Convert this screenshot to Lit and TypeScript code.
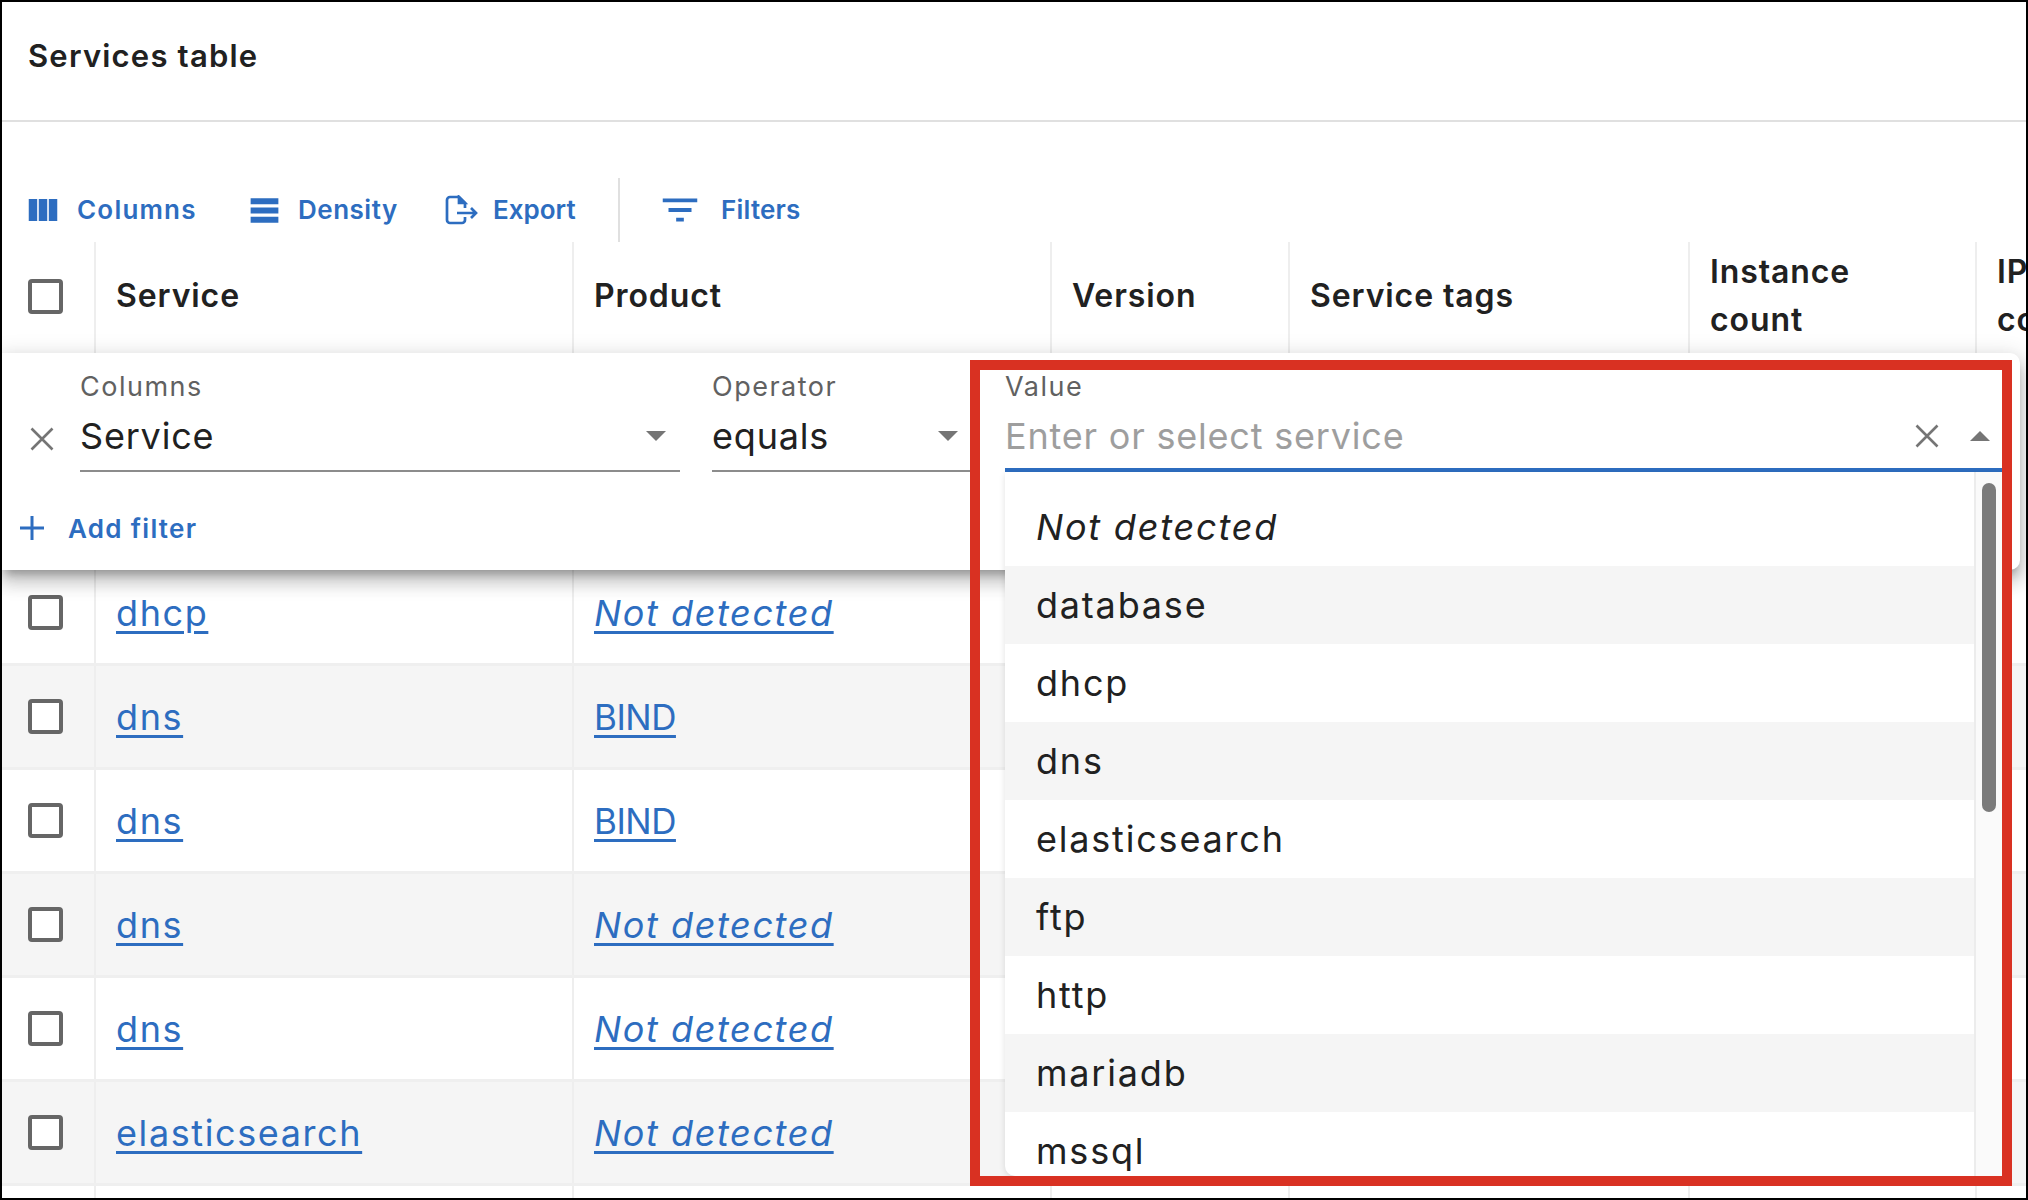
import { LitElement, html, css, svg } from 'lit';
import { customElement } from 'lit/decorators.js';

const ROWS = [
  { service: 'dhcp', product: 'Not detected' },
  { service: 'dns', product: 'BIND' },
  { service: 'dns', product: 'BIND' },
  { service: 'dns', product: 'Not detected' },
  { service: 'dns', product: 'Not detected' },
  { service: 'elasticsearch', product: 'Not detected' },
  { service: '', product: '' },
];

const OPTIONS = ['Not detected', 'database', 'dhcp', 'dns', 'elasticsearch', 'ftp', 'http', 'mariadb', 'mssql'];

const icon = (size: number, body: unknown) => html`
  <svg width=${size} height=${size} viewBox="0 0 24 24" fill="currentColor">${body}</svg>
`;

const closeIcon = html`
  <svg class="x" viewBox="0 0 24 24" fill="none" stroke="#757575" stroke-width="2.6">
    <path d="M1.5 1.5l21 21M22.5 1.5l-21 21"></path>
  </svg>
`;

@customElement('app-root')
export class AppRoot extends LitElement {
  static styles = css`
    :host {
      display: block;
      width: 2028px;
      height: 1200px;
      font-family: Inter, 'Noto Sans', sans-serif;
      color: #212121;
    }
    .frame {
      position: relative;
      box-sizing: border-box;
      width: 2028px;
      height: 1200px;
      border: 2px solid #000;
      overflow: hidden;
      background: #fff;
    }
    .title {
      box-sizing: border-box;
      height: 120px;
      padding: 34px 0 0 26px;
      border-bottom: 2px solid #e0e0e0;
      font-size: 31px;
      line-height: 40px;
      font-weight: 600;
      letter-spacing: 1.2px;
    }
    .toolbar {
      display: grid;
      grid-template-columns: 221px 195px 173px 45px 1fr;
      height: 64px;
      margin: 56px 0 0 27px;
      color: #2d6dc0;
      font-size: 26px;
      line-height: 62px;
      font-weight: 600;
    }
    .tool {
      display: flex;
      align-items: center;
    }
    .tool svg {
      flex: none;
    }
    .tool.columns {
      margin-left: -5px;
      gap: 15px;
      letter-spacing: 1.2px;
    }
    .tool.density {
      margin-left: -4px;
      gap: 15px;
      letter-spacing: 0.5px;
    }
    .tool.export {
      gap: 15px;
    }
    .tool.filters {
      margin-left: -6px;
      gap: 18px;
      letter-spacing: 0.2px;
    }
    .sep {
      width: 2px;
      background: #e0e0e0;
    }
    .row {
      display: grid;
      grid-template-columns: 92px 478px 478px 238px 400px 287px 200px;
      box-sizing: border-box;
      height: 104px;
      border-bottom: 3px solid #efefef;
      font-size: 36px;
      letter-spacing: 1.6px;
    }
    .row.head {
      height: 113px;
      font-weight: 600;
      font-size: 32px;
      line-height: 48px;
      letter-spacing: 0.9px;
      border-bottom: none;
    }
    .row.even {
      background: #f5f5f5;
    }
    .cell {
      display: flex;
      align-items: center;
      box-sizing: border-box;
      padding-left: 20px;
      border-left: 2px solid #eeeeee;
      overflow: hidden;
    }
    .row.head .cell {
      padding-bottom: 5px;
    }
    .cell.check {
      padding-left: 26px;
      border-left: none;
    }
    .box {
      box-sizing: border-box;
      width: 35px;
      height: 35px;
      border: 4px solid #666;
      border-radius: 4px;
      background: #fff;
    }
    .row a {
      color: #2d6dc0;
      text-decoration: underline;
      text-decoration-thickness: 3px;
      text-underline-offset: 5px;
    }
    .row a.none {
      font-style: italic;
    }
    .row a.name {
      font-size: 35px;
      letter-spacing: -0.5px;
    }
    .under-panel {
      height: 207px;
    }
    .panel {
      position: absolute;
      left: 0;
      top: 351px;
      width: 2018px;
      height: 217px;
      background: #fff;
      border-radius: 0 10px 10px 0;
      box-shadow: 0 8px 8px -4px rgba(0, 0, 0, 0.24), 0 12px 18px 2px rgba(0, 0, 0, 0.16), 0 4px 22px 3px rgba(0, 0, 0, 0.12);
    }
    .filter {
      display: flex;
      padding: 14px 0 0 28px;
    }
    .remove {
      display: flex;
      align-items: flex-end;
      width: 50px;
      padding-bottom: 21px;
    }
    .x {
      width: 24px;
      height: 24px;
      flex: none;
    }
    .field {
      position: relative;
      margin-right: 32px;
    }
    .field.col {
      width: 600px;
    }
    .field.op {
      width: 261px;
    }
    .field.val {
      width: 999px;
      margin-right: 0;
    }
    .label {
      font-size: 27px;
      line-height: 40px;
      letter-spacing: 1.5px;
      color: #616161;
    }
    .control {
      display: flex;
      align-items: center;
      box-sizing: border-box;
      height: 65px;
      padding: 4px 0 9px;
      border-bottom: 2px solid #8c8c8c;
      font-size: 36px;
      line-height: 50px;
      letter-spacing: 0.8px;
    }
    .val .control {
      padding-bottom: 7px;
      border-bottom: 4px solid #2d6dc0;
    }
    .grow {
      flex: 1;
    }
    .placeholder {
      color: #9e9e9e;
    }
    .arrow {
      width: 0;
      height: 0;
      border-left: 10px solid transparent;
      border-right: 10px solid transparent;
      border-top: 10px solid #757575;
      margin-right: 14px;
    }
    .op .arrow {
      margin-right: 15px;
    }
    .arrow.up {
      border-top: none;
      border-bottom: 10px solid #757575;
      margin-left: 31px;
    }
    .add {
      display: flex;
      align-items: center;
      gap: 23px;
      height: 40px;
      margin-top: 36px;
      padding-left: 17px;
      color: #2d6dc0;
      font-size: 26px;
      font-weight: 600;
      letter-spacing: 1.3px;
    }
    .menu {
      position: absolute;
      left: 0;
      top: 100%;
      display: flex;
      width: 100%;
      height: 704px;
      background: #fff;
      border-radius: 0 0 0 10px;
      overflow: hidden;
      box-shadow: 0 2px 6px rgba(0, 0, 0, 0.12);
    }
    .list {
      flex: 1;
      padding-top: 16px;
    }
    .option {
      display: flex;
      align-items: center;
      height: 78px;
      padding-left: 31px;
      font-size: 36px;
      letter-spacing: 1.8px;
    }
    .option.even {
      background: #f5f5f5;
    }
    .option.none {
      font-style: italic;
    }
    .scroll {
      box-sizing: border-box;
      width: 30px;
      padding: 11px 0 0 6px;
      border-left: 2px solid #ececec;
      background: #fafafa;
    }
    .thumb {
      width: 14px;
      height: 329px;
      border-radius: 7px;
      background: #7b7b7b;
    }
    .mark {
      position: absolute;
      left: 968px;
      top: 358px;
      box-sizing: border-box;
      width: 1042px;
      height: 826px;
      border: 10px solid #d93122;
      pointer-events: none;
    }
  `;

  private renderRow(r: { service: string; product: string }, i: number) {
    return html`
      <div class="row ${i % 2 ? 'even' : ''}">
        <div class="cell check">${r.service ? html`<div class="box"></div>` : ''}</div>
        <div class="cell"><a>${r.service}</a></div>
        <div class="cell"><a class=${r.product === 'Not detected' ? 'none' : 'name'}>${r.product}</a></div>
        <div class="cell"></div>
        <div class="cell"></div>
        <div class="cell"></div>
        <div class="cell"></div>
      </div>
    `;
  }

  render() {
    return html`
      <div class="frame">
        <div class="title">Services table</div>
        <div class="toolbar">
          <div class="tool columns">
            ${icon(38, svg`<path d="M14.67 5v14H9.33V5h5.34zm1 14H21V5h-5.33v14zm-7.34 0V5H3v14h5.33z"></path>`)}
            <span>Columns</span>
          </div>
          <div class="tool density">
            ${icon(37, svg`<path d="M21 8H3V4h18v4zM21 10H3v4h18v-4zM21 16H3v4h18v-4z"></path>`)}
            <span>Density</span>
          </div>
          <div class="tool export">
            <svg width="33" height="30" viewBox="0 0 33 30" fill="none" stroke="currentColor" stroke-width="2.7">
              <path d="M20 13V8l-6-6H5a3 3 0 0 0-3 3v20a3 3 0 0 0 3 3h12a3 3 0 0 0 3-3v-3"></path>
              <path d="M14 2v6h6z" fill="currentColor"></path>
              <path d="M12 18h19M26 13l5 5-5 5"></path>
            </svg>
            <span>Export</span>
          </div>
          <div class="sep"></div>
          <div class="tool filters">
            ${icon(46, svg`<path d="M10 18h4v-2h-4v2zM3 6v2h18V6H3zm3 7h12v-2H6v2z"></path>`)}
            <span>Filters</span>
          </div>
        </div>

        <div class="row head">
          <div class="cell check"><div class="box"></div></div>
          <div class="cell">Service</div>
          <div class="cell">Product</div>
          <div class="cell">Version</div>
          <div class="cell">Service tags</div>
          <div class="cell">Instance<br />count</div>
          <div class="cell">IP<br />count</div>
        </div>
        <div class="under-panel"></div>
        ${ROWS.map((r, i) => this.renderRow(r, i))}

        <div class="panel">
          <div class="filter">
            <div class="remove">${closeIcon}</div>
            <div class="field col">
              <div class="label">Columns</div>
              <div class="control"><span class="grow">Service</span><div class="arrow"></div></div>
            </div>
            <div class="field op">
              <div class="label">Operator</div>
              <div class="control"><span class="grow">equals</span><div class="arrow"></div></div>
            </div>
            <div class="field val">
              <div class="label">Value</div>
              <div class="control">
                <span class="grow placeholder">Enter or select service</span>
                ${closeIcon}
                <div class="arrow up"></div>
              </div>
              <div class="menu">
                <div class="list">
                  ${OPTIONS.map(
                    (o, i) => html`<div class="option ${i % 2 ? 'even' : ''} ${i === 0 ? 'none' : ''}">${o}</div>`
                  )}
                </div>
                <div class="scroll"><div class="thumb"></div></div>
              </div>
            </div>
          </div>
          <div class="add">
            <svg width="26" height="26" viewBox="0 0 26 26" fill="none" stroke="currentColor" stroke-width="3">
              <path d="M13 1v24M1 13h24"></path>
            </svg>
            <span>Add filter</span>
          </div>
        </div>

        <div class="mark"></div>
      </div>
    `;
  }
}
